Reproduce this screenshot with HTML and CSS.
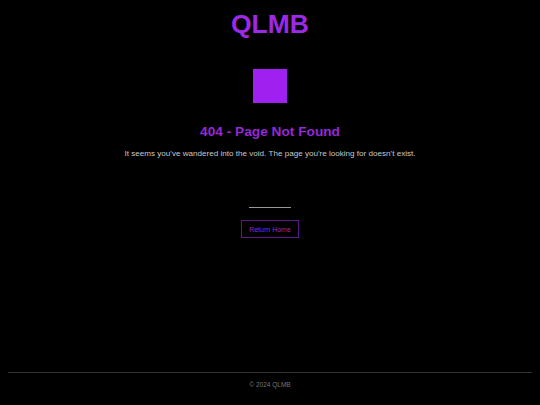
FILE: index.html
```html
<!DOCTYPE html>
<html>
<head>
<meta charset="utf-8">
<link rel="stylesheet" href="styles.css">
</head>
<body>
<div class="page">
  <header class="header"><h1 class="logo">QLMB</h1></header>
  <main class="main">
    <div class="square"></div>
    <h2 class="title">404 - Page Not Found</h2>
    <p class="message">It seems you've wandered into the void. The page you're looking for doesn't exist.</p>
    <div class="divider"></div>
    <a class="btn" href="#">Return Home</a>
  </main>
  <footer class="footer">© 2024 QLMB</footer>
</div>
</body>
</html>
```
FILE: styles.css
```css
html, body {
  margin: 0;
  padding: 0;
  background: #000;
}
body {
  font-family: "Liberation Sans", Arial, sans-serif;
  color: #ccc;
}
.page {
  height: 405px;
  padding: 0 8px;
  display: flex;
  flex-direction: column;
  box-sizing: border-box;
}
.header {
  display: flex;
  justify-content: center;
  padding-top: 8px;
}
.logo {
  margin: 0;
  font-size: 26.5px;
  line-height: 32px;
  font-weight: bold;
  color: #9d28e6;
}
.main {
  flex: 1;
  display: flex;
  flex-direction: column;
  align-items: center;
  padding-top: 29px;
}
.square {
  width: 34px;
  height: 34px;
  background: #a020f0;
}
.title {
  margin: 20px 0 0;
  font-size: 13.7px;
  line-height: 18px;
  font-weight: bold;
  color: #9528d8;
}
.message {
  margin: 8px 0 0;
  font-size: 8.1px;
  line-height: 10px;
  color: #c8c8c8;
}
.divider {
  margin-top: 48px;
  width: 42px;
  height: 1px;
  background: #999;
}
.btn {
  margin-top: 12px;
  box-sizing: border-box;
  width: 58px;
  height: 18px;
  border: 1px solid #5a1a8a;
  display: flex;
  align-items: center;
  justify-content: center;
  font-size: 7px;
  color: #9028d0;
  text-decoration: none;
}
.footer {
  border-top: 1px solid #333;
  height: 33px;
  padding-top: 8px;
  box-sizing: border-box;
  text-align: center;
  font-size: 6.5px;
  color: #777;
}
```
